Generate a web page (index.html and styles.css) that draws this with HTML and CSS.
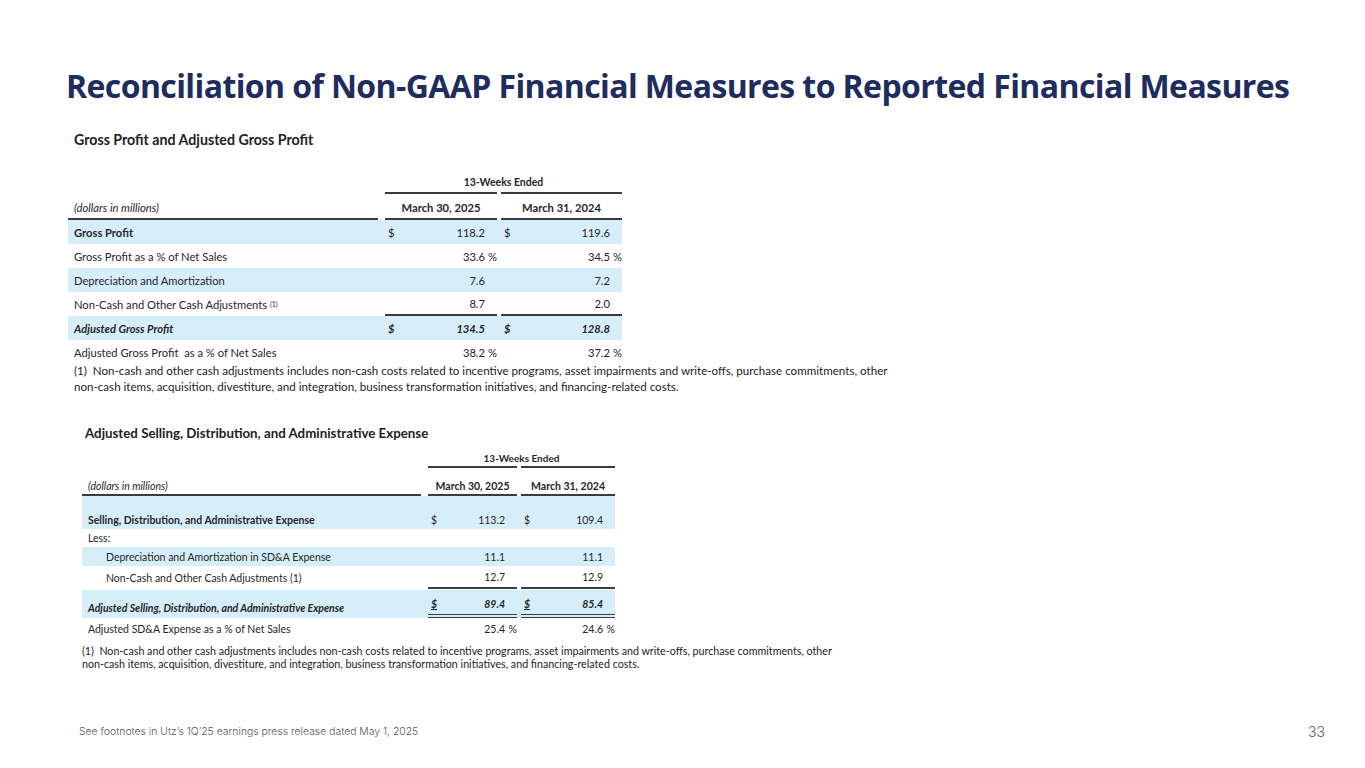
FILE: index.html
```html
<!DOCTYPE html>
<html>
<head>
<meta charset="utf-8">
<link rel="stylesheet" href="styles.css">
</head>
<body>
<div class="slide">
  <h1 class="title">Reconciliation of Non-GAAP Financial Measures to Reported Financial Measures</h1>

  <section class="block b1">
    <h2 class="tbl-title">Gross Profit and Adjusted Gross Profit</h2>
    <div class="tbl">
      <div class="row r-span">
        <div class="span-text">13-Weeks Ended</div>
        <div class="rule c2"></div>
        <div class="rule c3"></div>
      </div>
      <div class="row r-head">
        <div class="lbl ital under">(dollars in millions)</div>
        <div class="hd under">March 30, 2025</div>
        <div class="hd under">March 31, 2024</div>
      </div>
      <div class="row band">
        <div class="lbl bold">Gross Profit</div>
        <div class="val"><span>$</span><span class="num">118.2</span><span class="pct"></span></div>
        <div class="val"><span>$</span><span class="num">119.6</span><span class="pct"></span></div>
      </div>
      <div class="row">
        <div class="lbl">Gross Profit as a % of Net Sales</div>
        <div class="val"><span></span><span class="num">33.6</span><span class="pct">%</span></div>
        <div class="val"><span></span><span class="num">34.5</span><span class="pct">%</span></div>
      </div>
      <div class="row band">
        <div class="lbl">Depreciation and Amortization</div>
        <div class="val"><span></span><span class="num">7.6</span><span class="pct"></span></div>
        <div class="val"><span></span><span class="num">7.2</span><span class="pct"></span></div>
      </div>
      <div class="row">
        <div class="lbl">Non-Cash and Other Cash Adjustments&nbsp;<sup>(1)</sup></div>
        <div class="val under"><span></span><span class="num">8.7</span><span class="pct"></span></div>
        <div class="val under"><span></span><span class="num">2.0</span><span class="pct"></span></div>
      </div>
      <div class="row band bold ital">
        <div class="lbl">Adjusted Gross Profit</div>
        <div class="val"><span>$</span><span class="num">134.5</span><span class="pct"></span></div>
        <div class="val"><span>$</span><span class="num">128.8</span><span class="pct"></span></div>
      </div>
      <div class="row r-last">
        <div class="lbl">Adjusted Gross Profit&nbsp; as a % of Net Sales</div>
        <div class="val"><span></span><span class="num">38.2</span><span class="pct">%</span></div>
        <div class="val"><span></span><span class="num">37.2</span><span class="pct">%</span></div>
      </div>
    </div>
    <p class="note">(1)&nbsp; Non-cash and other cash adjustments includes non-cash costs related to incentive programs, asset impairments and write-offs, purchase commitments, other<br>non-cash items, acquisition, divestiture, and integration, business transformation initiatives, and financing-related costs.</p>
  </section>

  <section class="block b2">
    <h2 class="tbl-title">Adjusted Selling, Distribution, and Administrative Expense</h2>
    <div class="tbl">
      <div class="row r-span">
        <div class="span-text">13-Weeks Ended</div>
        <div class="rule c2"></div>
        <div class="rule c3"></div>
      </div>
      <div class="row r-head">
        <div class="lbl ital under">(dollars in millions)</div>
        <div class="hd under">March 30, 2025</div>
        <div class="hd under">March 31, 2024</div>
      </div>
      <div class="row band r-sdna">
        <div class="lbl bold">Selling, Distribution, and Administrative Expense</div>
        <div class="val"><span>$</span><span class="num">113.2</span><span class="pct"></span></div>
        <div class="val"><span>$</span><span class="num">109.4</span><span class="pct"></span></div>
      </div>
      <div class="row r-less">
        <div class="lbl">Less:</div>
        <div></div>
        <div></div>
      </div>
      <div class="row band r-dep">
        <div class="lbl indent">Depreciation and Amortization in SD&amp;A Expense</div>
        <div class="val"><span></span><span class="num">11.1</span><span class="pct"></span></div>
        <div class="val"><span></span><span class="num">11.1</span><span class="pct"></span></div>
      </div>
      <div class="row r-nc">
        <div class="lbl indent">Non-Cash and Other Cash Adjustments (1)</div>
        <div class="val under"><span></span><span class="num">12.7</span><span class="pct"></span></div>
        <div class="val under"><span></span><span class="num">12.9</span><span class="pct"></span></div>
      </div>
      <div class="row band bold ital r-adj">
        <div class="lbl">Adjusted Selling, Distribution, and Administrative Expense</div>
        <div class="val dbl"><span class="ul">$</span><span class="num">89.4</span><span class="pct"></span></div>
        <div class="val dbl"><span class="ul">$</span><span class="num">85.4</span><span class="pct"></span></div>
      </div>
      <div class="row r-pct">
        <div class="lbl">Adjusted SD&amp;A Expense as a % of Net Sales</div>
        <div class="val"><span></span><span class="num">25.4</span><span class="pct">%</span></div>
        <div class="val"><span></span><span class="num">24.6</span><span class="pct">%</span></div>
      </div>
    </div>
    <p class="note">(1)&nbsp; Non-cash and other cash adjustments includes non-cash costs related to incentive programs, asset impairments and write-offs, purchase commitments, other<br>non-cash items, acquisition, divestiture, and integration, business transformation initiatives, and financing-related costs.</p>
  </section>

  <footer class="footer">
    <span class="foot-note">See footnotes in Utz’s 1Q’25 earnings press release dated May 1, 2025</span>
    <span class="page-no">33</span>
  </footer>
</div>
</body>
</html>
```

FILE: styles.css
```css
* { box-sizing: border-box; }
html, body { margin: 0; padding: 0; background: #ffffff; }

.slide {
  width: 1365px;
  height: 768px;
  display: flex;
  flex-direction: column;
  padding: 66px 0 28px 0;
  color: #262626;
  font-family: Lato, "Liberation Sans", sans-serif;
}

.title {
  margin: 0 0 0 66px;
  font-family: "Open Sans", sans-serif;
  font-weight: 700;
  font-size: 32px;
  line-height: 40px;
  letter-spacing: -0.6px;
  color: #1f2d5e;
  white-space: nowrap;
}

.block { display: flex; flex-direction: column; align-items: flex-start; }
.b1 { margin: 26px 0 0 68px; }
.b2 { margin: 30px 0 0 82px; }

.tbl-title {
  margin: 0;
  line-height: 16px;
  font-weight: 700;
  color: #222;
}
.b1 .tbl-title { padding-left: 6px; font-size: 14.2px; margin-bottom: 22px; }
.b2 .tbl-title { padding-left: 3px; font-size: 13.3px; margin-bottom: 7px; }

.tbl { display: flex; flex-direction: column; font-size: 11.2px; }

.row {
  display: grid;
  column-gap: 4px;
  align-items: center;
  height: 24px;
}
.b1 .row { grid-template-columns: 313px 112px 121px; }
.b2 .row { grid-template-columns: 342px 89px 94px; font-size: 10.5px; }

.row > div { height: 100%; display: flex; align-items: center; }

.band { background: #d5eefa; }
.bold { font-weight: 700; }
.ital { font-style: italic; }

.lbl { padding-left: 6px; white-space: nowrap; }
.indent { padding-left: 24px; }
.lbl sup { font-size: 7px; vertical-align: 4px; line-height: 0; }

.r-span .span-text {
  grid-row: 1;
  grid-column: 2 / 4;
  justify-content: center;
  font-weight: 700;
  font-size: 10.5px;
}
.r-span .rule { grid-row: 1; border-bottom: 2px solid #3c3c3c; }
.r-span .c2 { grid-column: 2; }
.r-span .c3 { grid-column: 3; }

.hd { justify-content: center; font-weight: 700; }
.under { border-bottom: 2px solid #3c3c3c; }
.r-head .lbl.under { margin-right: 3px; }

.b1 .r-span { height: 24px; }
.b1 .r-head { height: 26px; }
.b1 .r-head > div { padding-top: 3px; }
.b1 .r-last { height: 23px; }
.b1 .r-last > div { padding-top: 2px; }

.val { padding-left: 3px; }
.val span:first-child { width: 10px; }
.val .num { margin-left: auto; }
.val .pct { width: 12px; text-align: right; }

.b2 .r-span { height: 20px; }
.b2 .r-span .span-text { font-size: 10px; }
.b2 .r-head { height: 28px; }
.b2 .r-head > div { padding-top: 9px; }
.b2 .r-sdna { height: 33px; }
.b2 .r-sdna > div { align-items: flex-end; padding-bottom: 3px; }
.b2 .r-less { height: 18px; }
.b2 .r-dep { height: 19px; }
.b2 .r-nc { height: 23px; }
.b2 .r-adj { height: 28px; margin-top: 1px; }
.b2 .r-adj > div { align-items: flex-end; padding-bottom: 4px; }
.b2 .r-pct { height: 22px; }
.dbl { border-bottom: 4px double #3c3c3c; }
.ul { text-decoration: underline; }

.note {
  margin: 0;
  font-size: 11.6px;
  line-height: 16px;
  padding-left: 6px;
  color: #222;
}
.b2 .note { font-size: 10.7px; line-height: 13px; padding-left: 0; margin-top: 4px; }

.footer {
  margin-top: auto;
  display: flex;
  align-items: center;
  justify-content: space-between;
  padding: 0 40px 0 79px;
  color: #555;
}
.foot-note {
  font-family: Inter, sans-serif;
  font-weight: 300;
  font-size: 10.4px;
  line-height: 14px;
}
.page-no {
  font-family: Inter, sans-serif;
  font-weight: 300;
  font-size: 14px;
}
```
